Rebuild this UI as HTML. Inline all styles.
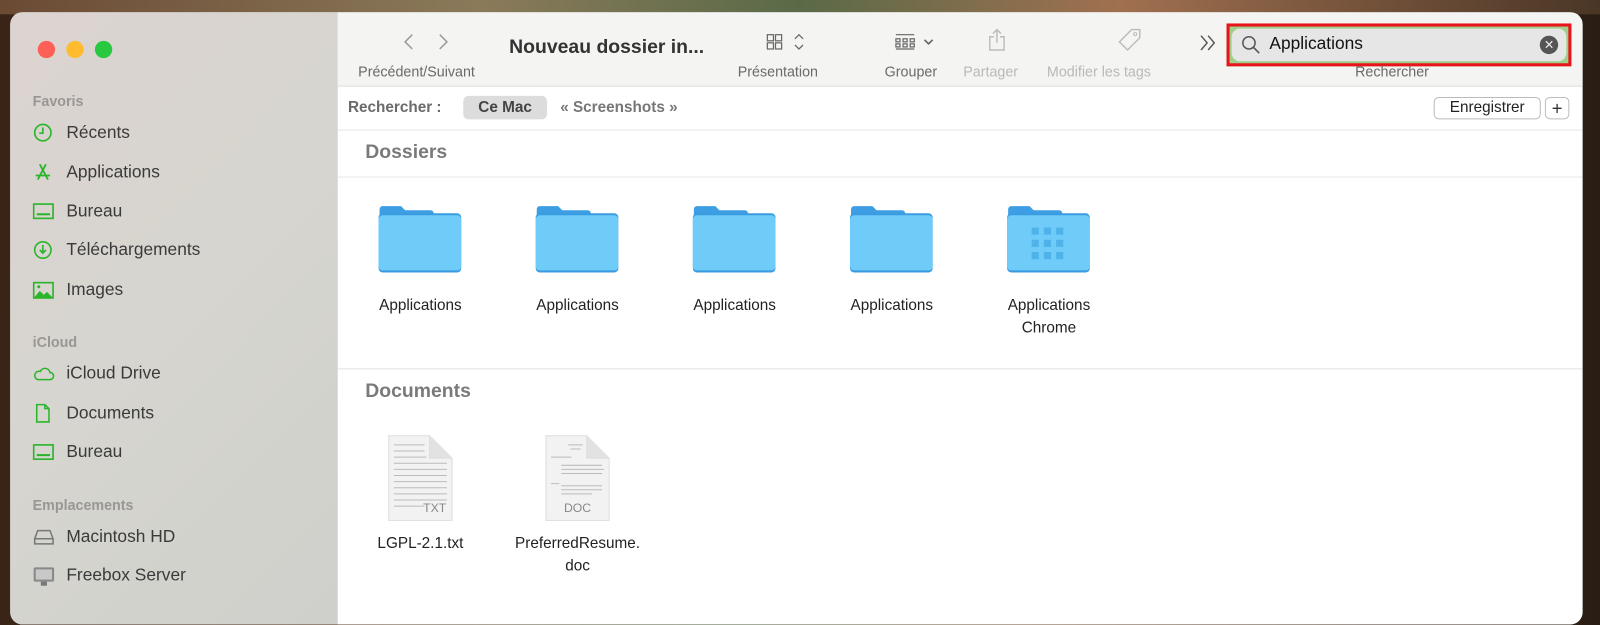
<!DOCTYPE html>
<html><head><meta charset="utf-8"><style>
*{margin:0;padding:0;box-sizing:border-box}
body{width:1600px;height:605px;overflow:hidden;position:relative;font-family:"Liberation Sans",sans-serif;background:linear-gradient(90deg,#3a2418 0%,#5a3a26 20%,#4a5a3a 45%,#6a4a30 65%,#3b2a1c 85%,#2a1e14 100%)}
#wrap{position:absolute;left:0;top:0;width:1568px;height:593px;transform:scale(1.0204);transform-origin:0 0}
.bgtop{position:absolute;left:0;top:0;width:1568px;height:14px;background:linear-gradient(90deg,#6b4a34,#8a7a5a 30%,#5a6a48 50%,#a07050 70%,#4a3626)}
.win{position:absolute;left:10px;top:12px;width:1541px;height:600px;border-radius:12px;overflow:hidden;background:#fff}
.side{position:absolute;left:0;top:0;width:321px;height:600px;background:linear-gradient(135deg,#dcd4d0,#d6d5cf 50%,#cfd0cb)}
.dot{position:absolute;top:28px;width:17px;height:17px;border-radius:50%}
.sh{position:absolute;left:22px;font-size:14px;font-weight:bold;color:#9a9693}
.si{position:absolute;left:22px;font-size:17px;color:#3a3a3a;height:22px;line-height:22px}
.si svg{position:absolute;left:0;top:1px}
.si span{position:absolute;left:33px;white-space:nowrap}
.main{position:absolute;left:321px;top:0;right:0;bottom:0}
.tb{position:absolute;left:0;top:0;right:0;height:73px;background:#f4f4f3;border-bottom:1px solid #e2e2e2}
.lbl{position:absolute;top:50px;font-size:14px;color:#6a6a6a;white-space:nowrap}
.dim{color:#b9b9b9}
.scope{position:absolute;left:0;top:73px;right:0;height:43px;border-bottom:1px solid #e6e6e6}
.hdr{position:absolute;left:0;right:0;height:46px;border-bottom:1px solid #e6e6e6;font-size:19px;font-weight:bold;color:#7a7a7a;padding-left:27px;line-height:44px}
.item{position:absolute;width:140px;text-align:center;font-size:15px;color:#222;line-height:22px}
.folder{position:absolute}
</style></head><body>
<div id="wrap">
<div class="bgtop"></div>
<div class="win">
<div class="side">
<div class="dot" style="left:27px;background:#fe5f57"></div>
<div class="dot" style="left:55px;background:#febc2e"></div>
<div class="dot" style="left:83px;background:#28c840"></div>
<div class="sh" style="top:79px">Favoris</div>
<div class="si" style="top:107px"><svg width="20" height="20" viewBox="0 0 20 20"><circle cx="10" cy="10" r="8" fill="none" stroke="#2ab52a" stroke-width="1.6"/><path d="M10 5v5.5H6.5" fill="none" stroke="#2ab52a" stroke-width="1.6"/></svg><span>Récents</span></div>
<div class="si" style="top:146px"><svg width="20" height="20" viewBox="0 0 20 20"><path d="M7 2l8 15M13 2L5 17M3 13h14" fill="none" stroke="#2ab52a" stroke-width="1.8"/></svg><span>Applications</span></div>
<div class="si" style="top:184px"><svg width="22" height="20" viewBox="0 0 22 20"><rect x="1" y="3" width="19" height="14" fill="none" stroke="#2ab52a" stroke-width="1.6"/><rect x="4" y="12" width="13" height="2" fill="#2ab52a"/></svg><span>Bureau</span></div>
<div class="si" style="top:222px"><svg width="20" height="20" viewBox="0 0 20 20"><circle cx="10" cy="10" r="8" fill="none" stroke="#2ab52a" stroke-width="1.6"/><path d="M10 5v8M7 10l3 3 3-3" fill="none" stroke="#2ab52a" stroke-width="1.6"/></svg><span>Téléchargements</span></div>
<div class="si" style="top:261px"><svg width="22" height="20" viewBox="0 0 22 20"><rect x="1" y="3" width="19" height="15" fill="none" stroke="#2ab52a" stroke-width="1.6"/><path d="M1 18l6-7 4 4 3-3 6 6z" fill="#2ab52a"/><circle cx="6" cy="7" r="1.5" fill="#2ab52a"/></svg><span>Images</span></div>
<div class="sh" style="top:315px">iCloud</div>
<div class="si" style="top:343px"><svg width="22" height="20" viewBox="0 0 22 20"><path d="M5 16h12a3.5 3.5 0 000-7 5 5 0 00-9.5-1A4 4 0 005 16z" fill="none" stroke="#2ab52a" stroke-width="1.5"/></svg><span>iCloud Drive</span></div>
<div class="si" style="top:382px"><svg width="20" height="20" viewBox="0 0 20 20"><path d="M4 1.5h8l4 4v13H4z M12 1.5v4h4" fill="none" stroke="#2ab52a" stroke-width="1.5"/></svg><span>Documents</span></div>
<div class="si" style="top:420px"><svg width="22" height="20" viewBox="0 0 22 20"><rect x="1" y="3" width="19" height="14" fill="none" stroke="#2ab52a" stroke-width="1.6"/><rect x="4" y="12" width="13" height="2" fill="#2ab52a"/></svg><span>Bureau</span></div>
<div class="sh" style="top:475px">Emplacements</div>
<div class="si" style="top:503px"><svg width="22" height="20" viewBox="0 0 22 20"><path d="M5 4h12l3 8v5H2v-5z M2 12h18" fill="none" stroke="#777" stroke-width="1.5"/></svg><span>Macintosh HD</span></div>
<div class="si" style="top:541px"><svg width="22" height="22" viewBox="0 0 22 22"><rect x="1" y="2" width="20" height="14" rx="1.5" fill="#888"/><rect x="3" y="4" width="16" height="10" fill="#c8c8c8"/><rect x="8" y="16" width="6" height="4" fill="#777"/></svg><span>Freebox Server</span></div>
</div>
<div class="main">
<div class="tb">
<svg style="position:absolute;left:62px;top:20px" width="50" height="18" viewBox="0 0 50 18"><path d="M11 2L4 9l7 7M38 2l7 7-7 7" fill="none" stroke="#9a9a9a" stroke-width="1.5"/></svg>
<div class="lbl" style="left:20px">Précédent/Suivant</div>
<div style="position:absolute;left:168px;top:24px;font-size:19px;font-weight:bold;color:#333">Nouveau dossier in...</div>
<svg style="position:absolute;left:420px;top:20px" width="42" height="18" viewBox="0 0 42 18"><g fill="none" stroke="#666" stroke-width="1.2"><rect x="1" y="2" width="6" height="6"/><rect x="9" y="2" width="6" height="6"/><rect x="1" y="10" width="6" height="6"/><rect x="9" y="10" width="6" height="6"/><path d="M28 6l4-4 4 4M28 12l4 4 4-4"/></g></svg>
<div class="lbl" style="left:392px">Présentation</div>
<svg style="position:absolute;left:546px;top:20px" width="46" height="18" viewBox="0 0 46 18"><g fill="none" stroke="#666" stroke-width="1.2"><path d="M1 2h18M1 16h18"/><rect x="1" y="6" width="4" height="3"/><rect x="8" y="6" width="4" height="3"/><rect x="15" y="6" width="4" height="3"/><rect x="1" y="11" width="4" height="3"/><rect x="8" y="11" width="4" height="3"/><rect x="15" y="11" width="4" height="3"/><path d="M29 7l4 4 4-4" stroke-width="1.6"/></g></svg>
<div class="lbl" style="left:536px">Grouper</div>
<svg style="position:absolute;left:636px;top:15px" width="20" height="24" viewBox="0 0 20 24"><path d="M7 9H3v13h14V9h-4M10 15V2M6 6l4-4 4 4" fill="none" stroke="#bbb" stroke-width="1.4"/></svg>
<div class="lbl dim" style="left:613px">Partager</div>
<svg style="position:absolute;left:764px;top:15px" width="24" height="24" viewBox="0 0 24 24"><path d="M14 2h8v8L10 22 2 14z" fill="none" stroke="#bbb" stroke-width="1.4"/><circle cx="17.5" cy="6.5" r="1.5" fill="none" stroke="#bbb"/></svg>
<div class="lbl dim" style="left:695px">Modifier les tags</div>
<svg style="position:absolute;left:843px;top:22px" width="20" height="16" viewBox="0 0 20 16"><path d="M3 1l6 7-6 7M10 1l6 7-6 7" fill="none" stroke="#555" stroke-width="1.4"/></svg>
<div style="position:absolute;left:871px;top:11px;width:338px;height:42px;border:3px solid #e8141a;background:#9fcf8a;padding:2px">
<div style="width:100%;height:100%;background:#e6e6e6;border-radius:8px;position:relative">
<svg style="position:absolute;left:9px;top:6px" width="20" height="20" viewBox="0 0 20 20"><circle cx="8" cy="8" r="6" fill="none" stroke="#555" stroke-width="1.5"/><path d="M12.5 12.5L18 18" stroke="#555" stroke-width="1.6"/></svg>
<div style="position:absolute;left:37px;top:5px;font-size:17px;color:#111">Applications</div>
<div style="position:absolute;right:8px;top:7px;width:18px;height:18px;border-radius:50%;background:#555;color:#eee;font-size:12px;text-align:center;line-height:18px">✕</div>
</div></div>
<div class="lbl" style="left:997px">Rechercher</div>
</div>
<div class="scope">
<div style="position:absolute;left:10px;top:12px;font-size:15px;font-weight:bold;color:#6a6a6a">Rechercher :</div>
<div style="position:absolute;left:123px;top:9px;width:82px;height:23px;background:#dcdcdc;border-radius:5px;font-size:15px;font-weight:bold;color:#444;text-align:center;line-height:23px">Ce Mac</div>
<div style="position:absolute;left:218px;top:12px;font-size:15px;font-weight:bold;color:#777">« Screenshots »</div>
<div style="position:absolute;left:1074px;top:10px;width:105px;height:22px;border:1px solid #bbb;border-radius:5px;font-size:15px;color:#222;text-align:center;line-height:20px">Enregistrer</div>
<div style="position:absolute;left:1183px;top:10px;width:24px;height:22px;border:1px solid #bbb;border-radius:5px;font-size:18px;color:#333;text-align:center;line-height:20px">+</div>
</div>
<div class="hdr" style="top:116px">Dossiers</div>
<div style="position:absolute;left:0;right:0;top:349px;border-top:1px solid #e2e2e2"></div>
<div class="hdr" style="top:350px;border-bottom:none">Documents</div>
</div>
</div>
<svg width="0" height="0" style="position:absolute"><defs>
<g id="fd"><path d="M2 4a3 3 0 013-3h18l4 4h25a3 3 0 013 3v4H2z" fill="#3d9ee4"/><rect x="1" y="8" width="81" height="58" rx="4" fill="#3b9be0"/><rect x="1" y="10" width="81" height="54" rx="4" fill="#6fcbf7"/></g>
</defs></svg>
<svg class="folder" style="left:370px;top:201px" width="84" height="68"><use href="#fd"/></svg>
<svg class="folder" style="left:524px;top:201px" width="84" height="68"><use href="#fd"/></svg>
<svg class="folder" style="left:678px;top:201px" width="84" height="68"><use href="#fd"/></svg>
<svg class="folder" style="left:832px;top:201px" width="84" height="68"><use href="#fd"/></svg>
<svg class="folder" style="left:986px;top:201px" width="84" height="68"><use href="#fd"/><g fill="#4fb2ea"><rect x="25" y="22" width="7" height="7"/><rect x="37" y="22" width="7" height="7"/><rect x="49" y="22" width="7" height="7"/><rect x="25" y="34" width="7" height="7"/><rect x="37" y="34" width="7" height="7"/><rect x="49" y="34" width="7" height="7"/><rect x="25" y="46" width="7" height="7"/><rect x="37" y="46" width="7" height="7"/><rect x="49" y="46" width="7" height="7"/></g></svg>
<div class="item" style="left:342px;top:289px">Applications</div>
<div class="item" style="left:496px;top:289px">Applications</div>
<div class="item" style="left:650px;top:289px">Applications</div>
<div class="item" style="left:804px;top:289px">Applications</div>
<div class="item" style="left:958px;top:289px">Applications<br>Chrome</div>
<svg style="position:absolute;left:378px;top:426px" width="68" height="86" viewBox="0 0 68 86"><path d="M3 1h40l22 22v61H3z" fill="#f2f2f2" stroke="#ddd"/><path d="M43 1v22h22" fill="#e2e2e2" stroke="#ddd"/><g stroke="#bbb" stroke-width="1"><path d="M8 10h30M8 16h30M8 22h32M8 28h52M8 34h52M8 40h52M8 46h52M8 52h52M8 58h52M8 64h52M8 70h30"/></g><text x="48" y="76" font-family="Liberation Sans" font-size="12" fill="#888" text-anchor="middle">TXT</text></svg>
<svg style="position:absolute;left:532px;top:426px" width="68" height="86" viewBox="0 0 68 86"><path d="M3 1h40l22 22v61H3z" fill="#f2f2f2" stroke="#ddd"/><path d="M43 1v22h22" fill="#e2e2e2" stroke="#ddd"/><g stroke="#bbb" stroke-width="1"><path d="M25 10h14M27 14h10M8 22h20M18 30h40M18 34h42M18 38h40M8 48h8M18 50h40M18 54h40M18 58h30"/></g><text x="34" y="76" font-family="Liberation Sans" font-size="12" fill="#888" text-anchor="middle">DOC</text></svg>
<div class="item" style="left:342px;top:522px">LGPL-2.1.txt</div>
<div class="item" style="left:496px;top:522px">PreferredResume.<br>doc</div>
</div>
</body></html>
